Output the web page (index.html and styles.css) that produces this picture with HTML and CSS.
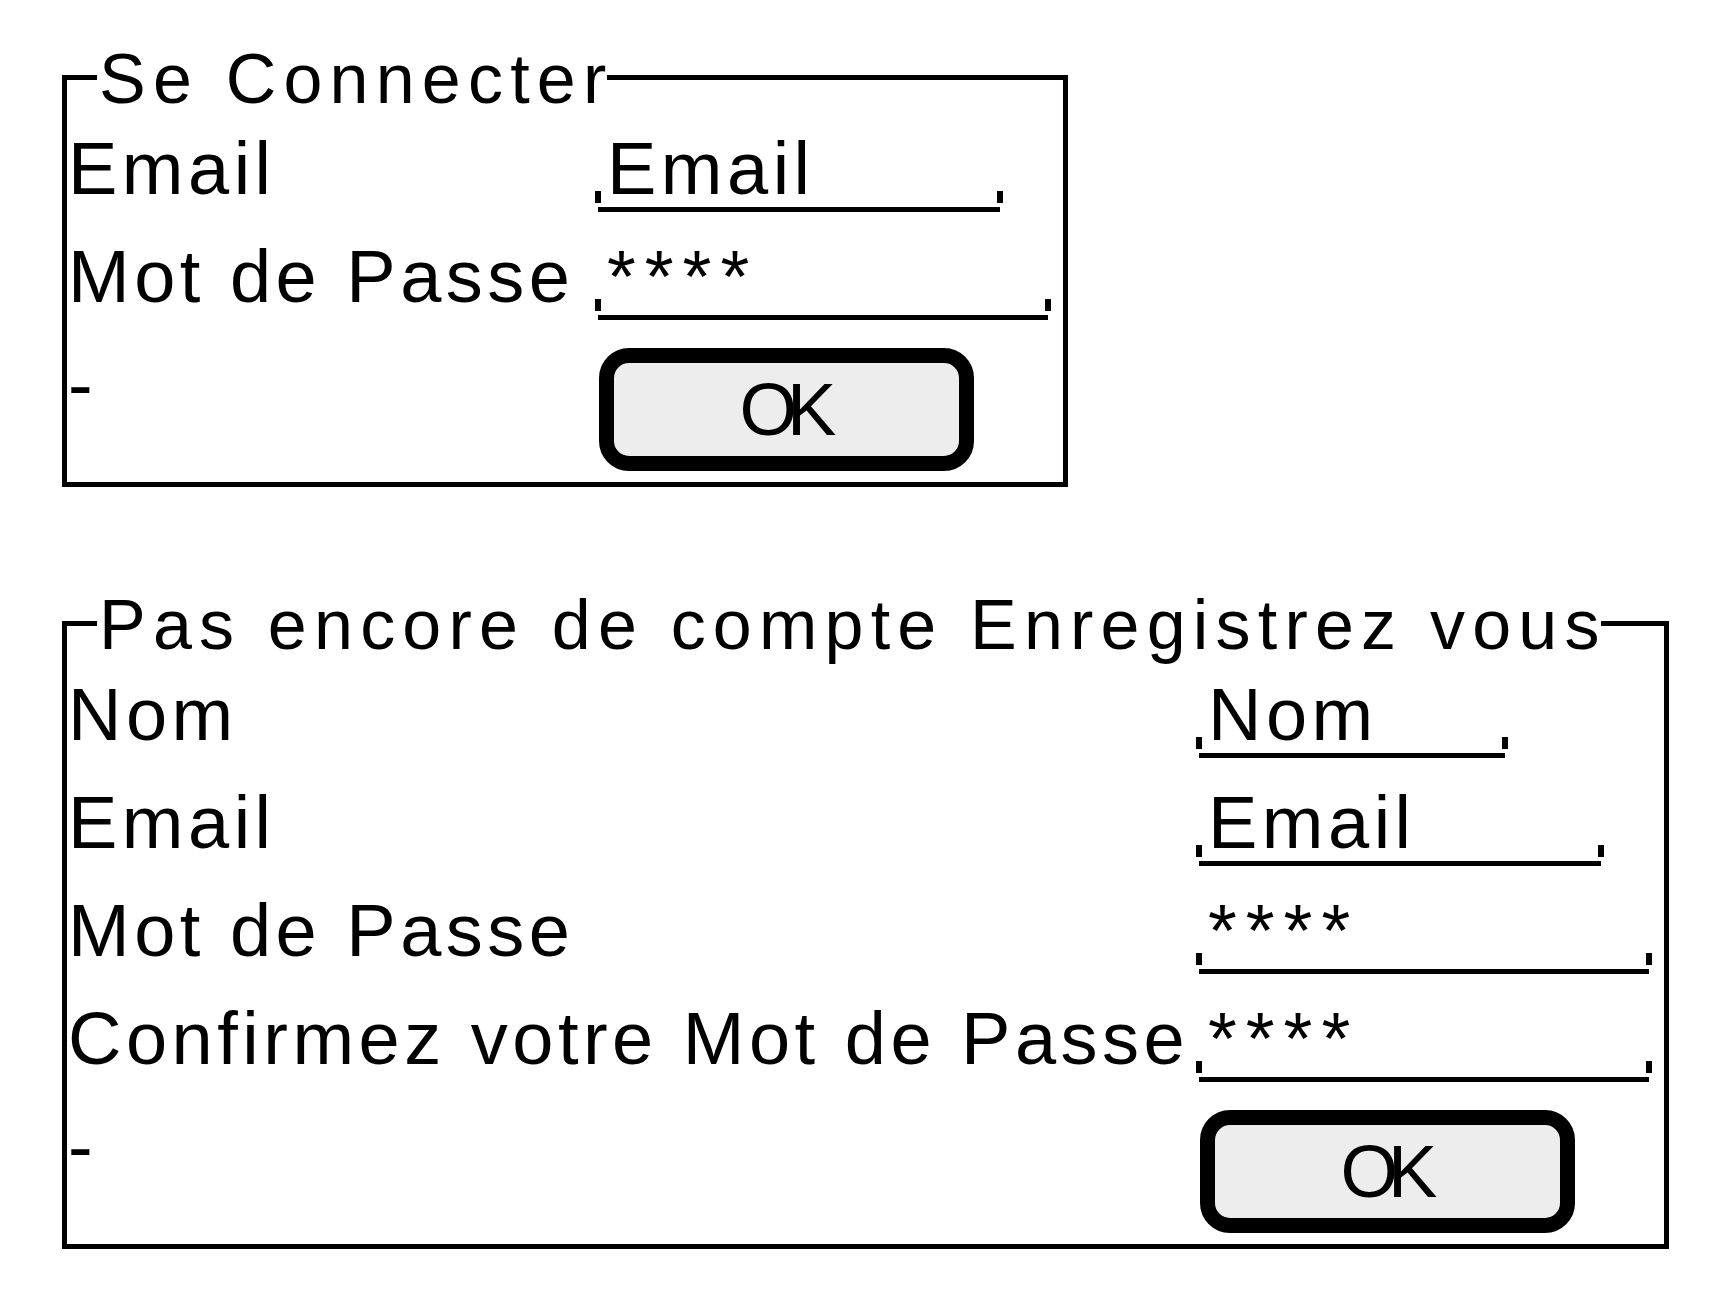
FILE: index.html
```html
<!DOCTYPE html>
<html lang="fr">
<head>
<meta charset="utf-8">
<title>Se Connecter</title>
<link rel="stylesheet" href="styles.css">
</head>
<body>
<main class="page">
  <section class="panel">
    <div class="panel-head">
      <span class="rule rule-start"></span>
      <h2 class="panel-title">Se Connecter</h2>
      <span class="rule rule-end"></span>
    </div>
    <div class="panel-body form-grid login-grid">
      <div class="label">Email</div>
      <div class="field field-email"><span class="tick"></span><span class="val">Email</span><span class="tick"></span></div>
      <div class="label">Mot de Passe</div>
      <div class="field field-pass"><span class="tick"></span><span class="val val-pass">****</span><span class="tick"></span></div>
      <div class="label">-</div>
      <div class="action"><button class="btn" type="button">OK</button></div>
    </div>
  </section>

  <section class="panel">
    <div class="panel-head">
      <span class="rule rule-start"></span>
      <h2 class="panel-title">Pas encore de compte Enregistrez vous</h2>
      <span class="rule rule-end"></span>
    </div>
    <div class="panel-body form-grid register-grid">
      <div class="label">Nom</div>
      <div class="field field-name"><span class="tick"></span><span class="val">Nom</span><span class="tick"></span></div>
      <div class="label">Email</div>
      <div class="field field-email"><span class="tick"></span><span class="val">Email</span><span class="tick"></span></div>
      <div class="label">Mot de Passe</div>
      <div class="field field-pass"><span class="tick"></span><span class="val val-pass">****</span><span class="tick"></span></div>
      <div class="label">Confirmez votre Mot de Passe</div>
      <div class="field field-pass"><span class="tick"></span><span class="val val-pass">****</span><span class="tick"></span></div>
      <div class="label">-</div>
      <div class="action"><button class="btn" type="button">OK</button></div>
    </div>
  </section>
</main>
</body>
</html>
```
FILE: styles.css
```css
html, body {
  margin: 0;
  background: #ffffff;
  color: #000000;
  font-family: "Liberation Sans", Arial, sans-serif;
}

.page {
  display: flex;
  flex-direction: column;
  align-items: flex-start;
  gap: 98px;
  padding: 39px 0 0 62px;
}

.panel {
  display: flex;
  flex-direction: column;
}

.panel-head {
  display: flex;
  height: 80px;
}

.rule {
  margin-top: 36px;
  border-top: 5px solid #000;
}

.rule-start {
  width: 30px;
  flex: none;
  border-left: 5px solid #000;
}

.rule-end {
  flex: 1;
  border-right: 5px solid #000;
}

.panel-title {
  margin: 0 -6px 0 2px;
  font-size: 70px;
  font-weight: 400;
  line-height: 80px;
  letter-spacing: 7.2px;
  white-space: nowrap;
}

.panel-body {
  display: grid;
  border: 5px solid #000;
  border-top: 0;
  padding: 0 12px 0 1px;
}

.login-grid {
  grid-template-columns: 527px 456px;
  grid-template-rows: 108px 108px 147px;
}

.register-grid {
  grid-template-columns: 1128px 456px;
  grid-template-rows: 108px 108px 108px 108px 147px;
}

.label {
  padding-top: 7px;
  font-size: 74px;
  line-height: 85px;
  letter-spacing: 4.5px;
  white-space: nowrap;
}

.field {
  display: flex;
  align-items: flex-end;
  align-self: start;
  margin-top: 11px;
}

.field-name { width: 312px; }
.field-email { width: 408px; }
.field-pass { width: 456px; }

.tick {
  flex: none;
  width: 6px;
  height: 12px;
  margin-bottom: 9px;
  background: #000;
}

.val {
  flex: 1;
  margin: 0 -3px;
  padding-left: 9px;
  border-bottom: 5px solid #000;
  font-size: 74px;
  line-height: 77px;
  letter-spacing: 4.5px;
  white-space: nowrap;
}

.val-pass {
  letter-spacing: 9px;
}

.action {
  padding: 13px 0 0 4px;
}

.btn {
  box-sizing: border-box;
  display: flex;
  align-items: center;
  justify-content: center;
  width: 375px;
  height: 123px;
  padding: 0 7px 0 0;
  border: 15px solid #000;
  border-radius: 30px;
  background: #ededed;
  color: #000;
  font-family: "Liberation Sans", Arial, sans-serif;
  font-size: 74px;
  font-weight: 400;
  line-height: 85px;
  letter-spacing: -10px;
}
```
